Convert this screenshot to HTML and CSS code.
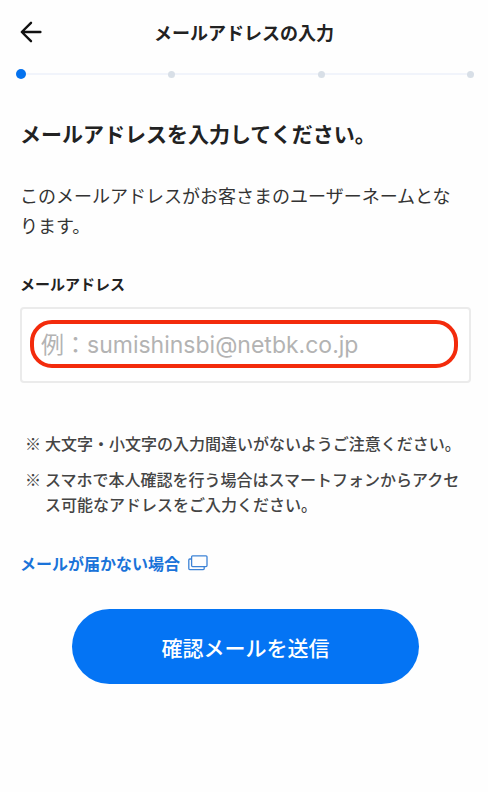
FILE: index.html
```html
<!DOCTYPE html>
<html lang="ja">
<head>
    <meta charset="UTF-8">
    <meta name="viewport" content="width=device-width, initial-scale=1.0">
    <title>メールアドレスの入力</title>
    <link rel="stylesheet" href="styles.css">
</head>
<body>
    <header class="header">
        <button type="button" class="back" aria-label="戻る">
            <svg width="22" height="22" viewBox="0 0 22 22" fill="none" stroke="#111" stroke-width="2.4" stroke-linecap="round" stroke-linejoin="round">
                <path d="M20.4 11H2M11 1.8L1.8 11l9.2 9.2"/>
            </svg>
        </button>
        <h1 class="title">メールアドレスの入力</h1>
    </header>

    <ol class="steps">
        <li class="step current"></li>
        <li class="step"></li>
        <li class="step"></li>
        <li class="step"></li>
    </ol>

    <main class="content">
        <h2 class="heading">メールアドレスを入力してください。</h2>
        <p class="lead">このメールアドレスがお客さまのユーザーネームとなります。</p>

        <form>
            <label class="label" for="email">メールアドレス</label>
            <div class="field">
                <input class="input" type="email" id="email" placeholder="例：sumishinsbi@netbk.co.jp">
            </div>

            <ul class="notes">
                <li>大文字・小文字の入力間違いがないようご注意ください。</li>
                <li>スマホで本人確認を行う場合はスマートフォンからアクセス可能なアドレスをご入力ください。</li>
            </ul>

            <a class="help" href="#">メールが届かない場合
                <svg width="20" height="16" viewBox="0 0 20 16" fill="none" stroke="#3d83d6" stroke-width="1.3" stroke-linejoin="round">
                    <rect x="3.6" y="0.8" width="15.4" height="10.8" rx="1"/>
                    <path d="M3.6 4H1.8a1 1 0 0 0-1 1v8.6a1 1 0 0 0 1 1h13.4a1 1 0 0 0 1-1v-2"/>
                </svg>
            </a>

            <button type="submit" class="submit">確認メールを送信</button>
        </form>
    </main>
</body>
</html>
```
FILE: styles.css
```css
* {
    box-sizing: border-box;
}

body {
    margin: 0;
    background-color: #fefefe;
    color: #222;
    font-family: "Noto Sans CJK JP", sans-serif;
    font-size: 18px;
}

.header {
    display: grid;
    grid-template-columns: 22px 1fr 22px;
    align-items: center;
    padding: 17px 20px 0;
}

.back {
    display: flex;
    padding: 0;
    border: 0;
    background: none;
}

.title {
    margin: 0;
    font-size: 18px;
    line-height: 30px;
    text-align: center;
}

.steps {
    display: flex;
    justify-content: space-between;
    align-items: center;
    height: 10px;
    margin: 22px 14px 0 16px;
    padding: 0;
    list-style: none;
    background: linear-gradient(#f1f4fb, #f1f4fb) center / 100% 2px no-repeat;
}

.step {
    width: 7px;
    height: 7px;
    border-radius: 50%;
    background-color: #d8dfe7;
}

.step.current {
    width: 10px;
    height: 10px;
    background-color: #0572ee;
}

.content {
    padding: 39px 17px 40px 20px;
}

.heading {
    margin: 0;
    font-size: 21px;
    line-height: 30px;
}

.lead {
    margin: 32px 0 0;
    padding-right: 12px;
    line-height: 30px;
    color: #333;
}

.label {
    display: block;
    margin-top: 32px;
    font-size: 15px;
    font-weight: bold;
    line-height: 24px;
}

.field {
    margin-top: 11px;
    padding: 11px 11px 13px 8px;
    border: 2px solid #ebebeb;
    border-radius: 4px;
    background-color: #fff;
}

.input {
    display: block;
    width: 100%;
    height: 48px;
    padding: 2px 7px 0;
    border: 4px solid #f32b0c;
    border-radius: 22px;
    background: none;
    font-family: Inter, "Noto Sans CJK JP", sans-serif;
    font-size: 23px;
}

.input::placeholder {
    color: #b3b3b3;
}

.notes {
    margin: 48px 0 0;
    padding: 0 0 0 5px;
    list-style: none;
    font-size: 16px;
    font-weight: 500;
    line-height: 25px;
    color: #444;
}

.notes li {
    display: flex;
    gap: 4px;
}

.notes li + li {
    margin-top: 11px;
}

.notes li::before {
    content: "※";
}

.help {
    display: flex;
    align-items: center;
    gap: 8px;
    width: fit-content;
    margin-top: 34px;
    font-size: 16px;
    font-weight: bold;
    line-height: 24px;
    color: #1a73d9;
    text-decoration: none;
}

.submit {
    display: block;
    width: 77%;
    height: 75px;
    margin: 34px auto 0;
    border: 0;
    border-radius: 38px;
    background-color: #0474f4;
    color: #fff;
    font-family: inherit;
    font-size: 21px;
    font-weight: 500;
}
```
